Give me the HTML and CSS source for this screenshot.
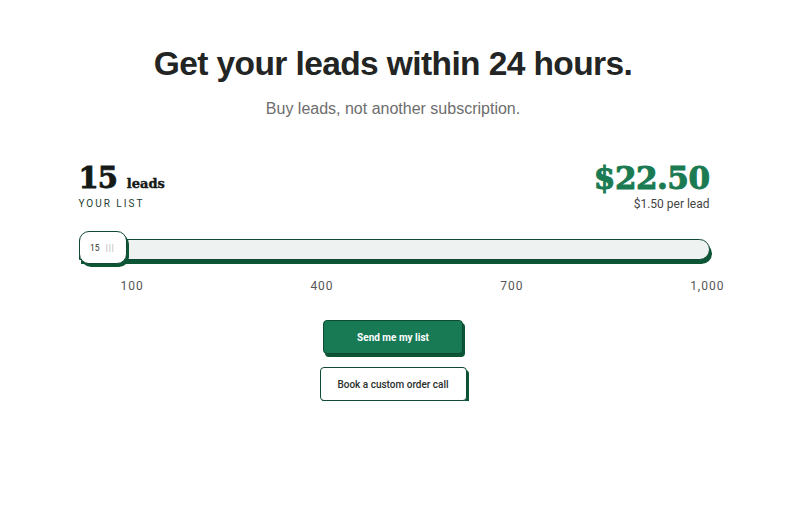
FILE: index.html
```html
<!DOCTYPE html>
<html>
<head>
<meta charset="utf-8">
<link rel="stylesheet" href="styles.css">
</head>
<body>
<main class="page">
  <h1 class="title">Get your leads within 24 hours.</h1>
  <p class="subtitle">Buy leads, not another subscription.</p>

  <section class="calc">
    <div class="summary">
      <div class="count">
        <div class="count-line"><span class="big">15</span><span class="unit">leads</span></div>
        <div class="label">YOUR LIST</div>
      </div>
      <div class="price">
        <div class="amount">$22.50</div>
        <div class="per">$1.50 per lead</div>
      </div>
    </div>

    <div class="slider">
      <div class="track"></div>
      <div class="thumb"><span class="thumb-val">15</span><span class="grip">|||</span></div>
    </div>

    <div class="ticks">
      <span>100</span><span>400</span><span>700</span><span>1,000</span>
    </div>
  </section>

  <div class="actions">
    <button class="btn primary">Send me my list</button>
    <button class="btn secondary">Book a custom order call</button>
  </div>
</main>
</body>
</html>
```

FILE: styles.css
```css
* { box-sizing: border-box; }
html, body { margin: 0; padding: 0; background: #fff; }
body { font-family: "Liberation Sans", Arial, sans-serif; color: #1f2321; }

.page {
  width: 786px;
  display: flex;
  flex-direction: column;
  align-items: center;
  padding-top: 42px;
}

.title {
  margin: 0;
  font-size: 33.5px;
  font-weight: 700;
  line-height: 44px;
  letter-spacing: -0.6px;
  color: #222523;
}

.subtitle {
  margin: 13px 0 0;
  font-size: 16px;
  line-height: 20px;
  color: #6d6d6d;
}

.calc {
  width: 631px;
  margin-top: 44px;
  margin-left: 2px;
}

.summary {
  display: flex;
  justify-content: space-between;
  align-items: flex-start;
}

.count-line {
  display: flex;
  align-items: baseline;
  gap: 10px;
  font-family: "DejaVu Serif", serif;
  font-weight: 700;
  color: #151a17;
}
.big {
  font-size: 29px;
  line-height: 30px;
  letter-spacing: -1px;
  -webkit-text-stroke: 0.9px #151a17;
}
.unit { font-size: 13px; -webkit-text-stroke: 0.4px #151a17; }

.label {
  margin-top: 5px;
  font-family: "Roboto", sans-serif;
  font-size: 10px;
  letter-spacing: 2px;
  color: #1d3d2f;
}

.price { text-align: right; }
.amount {
  font-family: "DejaVu Serif", serif;
  font-weight: 700;
  font-size: 31px;
  line-height: 30px;
  letter-spacing: -0.5px;
  color: #1a7a52;
  -webkit-text-stroke: 1px #1a7a52;
}
.per {
  margin-top: 4px;
  font-family: "Roboto", sans-serif;
  font-size: 12px;
  color: #444;
}

.slider {
  position: relative;
  height: 36px;
  margin-top: 20px;
}
.track {
  position: absolute;
  left: 0;
  right: 0;
  top: 8px;
  height: 21px;
  background: #eef3f1;
  border: 1px solid #0f4a33;
  border-radius: 0 11px 11px 0;
  box-shadow: 2px 4px 0 #0c5535;
}
.thumb {
  position: absolute;
  left: 0;
  top: 0;
  width: 48px;
  height: 33px;
  background: #fff;
  border: 1px solid #0f4a33;
  border-radius: 10px;
  box-shadow: 2px 3px 0 #0c5535;
  display: flex;
  align-items: center;
  justify-content: center;
  gap: 6px;
  font-family: "Roboto", sans-serif;
  font-size: 8.5px;
  color: #333;
}
.grip { color: #aaa; letter-spacing: 1px; }

.ticks {
  display: flex;
  justify-content: space-between;
  margin-top: 12px;
  padding-left: 42px;
  margin-right: -15px;
  font-family: "Roboto", sans-serif;
  font-size: 12px;
  letter-spacing: 1px;
  color: #555;
}

.actions {
  margin-top: 27px;
  display: flex;
  flex-direction: column;
  align-items: center;
  gap: 13px;
}
.btn {
  font-family: "Roboto", sans-serif;
  font-size: 10px;
  border-radius: 4px;
  border: 1px solid #0f4a33;
  box-shadow: 2px 3px 0 #0c5535;
  cursor: pointer;
}
.primary {
  width: 140px;
  height: 34px;
  background: #177a55;
  color: #fff;
  font-weight: 700;
}
.secondary {
  width: 147px;
  height: 34px;
  background: #fff;
  color: #2a2f2c;
  font-weight: 500;
}
```
